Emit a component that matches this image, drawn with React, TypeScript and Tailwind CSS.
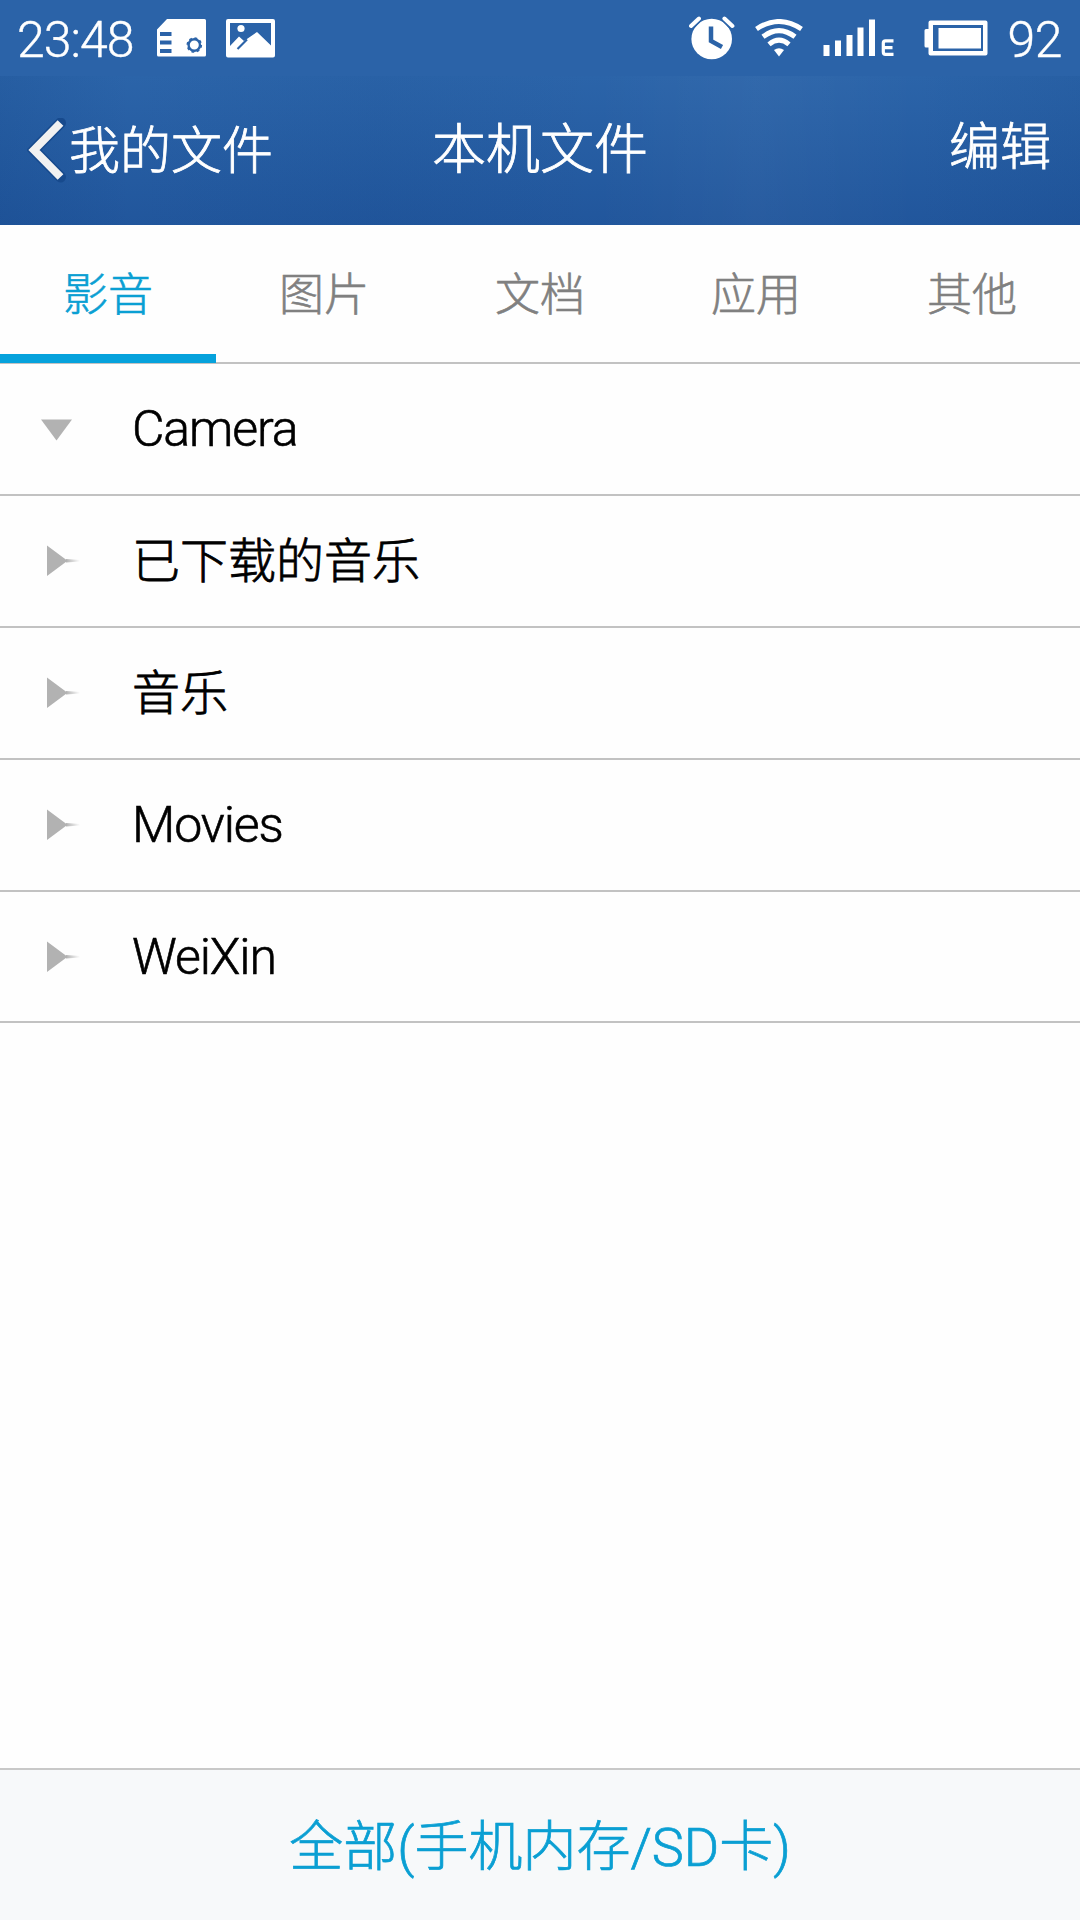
import type { ReactNode } from "react";

const tabs = ["影音", "图片", "文档", "应用", "其他"];
const folders = [
  { name: "Camera", open: true, latin: true },
  { name: "已下载的音乐", open: false, latin: false },
  { name: "音乐", open: false, latin: false },
  { name: "Movies", open: false, latin: true },
  { name: "WeiXin", open: false, latin: true },
];

function SimIcon() {
  return (
    <svg className="ml-6 block" width="49" height="38" viewBox="0 0 49 38">
      <path
        fillRule="evenodd"
        fill="#fff"
        d="M10 0H47.500Q49 0 49 1.500V36Q49 37.500 47.500 37.500H1.500Q0 37.500 0 36V10.500ZM3 13V17H14.500V13ZM3 21.500V25.500H14.500V21.500ZM3 30V34H14.500V30Z"
      />
      <circle cx="37.300" cy="26" r="5.700" fill="none" stroke="#2b63a8" strokeWidth="2.400" />
      <circle cx="37.300" cy="26" r="7" fill="none" stroke="#2b63a8" strokeWidth="1.600" strokeDasharray="2.800 2.700" />
    </svg>
  );
}

function PictureIcon() {
  return (
    <svg className="ml-5 block" width="49" height="39" viewBox="0 0 49 39">
      <path
        fillRule="evenodd"
        fill="#fff"
        d="M2 0H47Q49 0 49 2V36.500Q49 38.500 47 38.500H2Q0 38.500 0 36.500V2Q0 0 2 0ZM4 4V27L13 17.500L18 22L31 13L45 26.500V4Z"
      />
      <circle cx="15" cy="9.500" r="3.600" fill="#fff" />
      <path d="M11.500 30L21 20.500" stroke="#2b63a8" strokeWidth="2.200" />
    </svg>
  );
}

function AlarmIcon() {
  return (
    <svg className="block" width="46" height="44" viewBox="0 0 46 44">
      <circle cx="22.700" cy="23" r="20.300" fill="#fff" />
      <path d="M2 10.500L10 2.500M43.400 10.500L35.400 2.500" stroke="#2b63a8" strokeWidth="7" />
      <path d="M2 10L10 2.500M43.400 10L35.400 2.500" stroke="#fff" strokeWidth="4" strokeLinecap="round" />
      <path d="M22 10.500V25L33 31" fill="none" stroke="#2b63a8" strokeWidth="4.500" />
    </svg>
  );
}

function WifiIcon() {
  return (
    <svg className="ml-5 block" width="48" height="38" viewBox="0 0 48 38">
      <g fill="none" stroke="#fff" strokeWidth="5">
        <path d="M1.500 10Q24 -5 46.500 10" />
        <path d="M8 17.800Q24 5.500 40 17.800" />
        <path d="M14 25.300Q24 17 34 25.300" />
      </g>
      <path d="M19 31Q24 27.500 29 31L24 37.500Z" fill="#fff" />
    </svg>
  );
}

function SignalIcon() {
  return (
    <svg className="ml-5 block" width="72" height="38" viewBox="0 0 72 38">
      <path
        fill="#fff"
        d="M0.500 26H6.500V37H0.500ZM12 21.500H18V37H12ZM23.500 16H29.500V37H23.500ZM34.500 8.500H40.500V37H34.500ZM46 0.500H52V37H46Z"
      />
      <path d="M70.500 21.800H62.500Q60.300 21.800 60.300 24V33Q60.300 35.400 62.500 35.400H70.500M60.300 28.600H69.500" fill="none" stroke="#fff" strokeWidth="3.200" />
    </svg>
  );
}

function BatteryIcon() {
  return (
    <svg className="ml-[29px] block" width="64" height="36" viewBox="0 0 64 36">
      <path
        fillRule="evenodd"
        fill="#fff"
        d="M6.500 0.500H61.500Q63.500 0.500 63.500 2.500V33.500Q63.500 35.500 61.500 35.500H6.500Q4.500 35.500 4.500 33.500V27.500H2Q0.500 27.500 0.500 26V10.500Q0.500 9 2 9H4.500V2.500Q4.500 0.500 6.500 0.500ZM9 5V31H59V5Z"
      />
      <path fill="#fff" d="M14.500 8H57V28.500H14.500Z" />
    </svg>
  );
}

function Marker({ open }: { open: boolean }) {
  return open ? (
    <svg className="block" width="45" height="32" viewBox="0 0 45 32">
      <path d="M0 6.500H31L15.500 27.500Z" fill="#b2b2b2" />
    </svg>
  ) : (
    <svg className="block" width="45" height="32" viewBox="0 0 45 32">
      <defs>
        <linearGradient id="tail">
          <stop offset="0" stopColor="#b2b2b2" />
          <stop offset="1" stopColor="#b2b2b2" stopOpacity="0" />
        </linearGradient>
      </defs>
      <path d="M6 0.500V31L26.500 15.700Z" fill="#b2b2b2" />
      <path d="M25 14L39 15V16.500L25 17.500Z" fill="url(#tail)" />
    </svg>
  );
}

function Row({ open, latin, children }: { open: boolean; latin: boolean; children: ReactNode }) {
  return (
    <li className="flex h-[132px] items-center border-b-2 border-[#c2c2c2] pl-[41px] last:h-[131px]">
      <Marker open={open} />
      <span
        className={
          latin
            ? "ml-[46px] text-[50px] leading-none tracking-[-1.1px] text-black [-webkit-text-stroke:0.6px]"
            : "ml-[46px] pt-px text-[48px] leading-none text-black [-webkit-text-stroke:0.8px]"
        }
      >
        {children}
      </span>
    </li>
  );
}

export default function App() {
  return (
    <div className="flex h-[1920px] w-[1080px] flex-col overflow-hidden bg-[#fefefe] font-['Roboto','Noto_Sans_CJK_SC',sans-serif] font-light">
      <div className="flex h-[76px] shrink-0 items-center bg-[#2b63a8] pr-[18px] pl-[17px] text-[50px] leading-none text-white">
        <span className="pt-[3px] tracking-[-1px] [-webkit-text-stroke:0.4px]">23:48</span>
        <SimIcon />
        <PictureIcon />
        <div className="ml-auto flex items-center">
          <AlarmIcon />
          <WifiIcon />
          <SignalIcon />
          <BatteryIcon />
          <span className="ml-5 pt-[3px] tracking-[-0.5px] [-webkit-text-stroke:0.4px]">92</span>
        </div>
      </div>
      <header className="grid h-[149px] shrink-0 grid-cols-3 items-center bg-[linear-gradient(90deg,#0b3a7a26,transparent_12%,#0b3a7a10_35%,transparent_55%,#ffffff08_70%,transparent_85%,#0b3a7a1c),linear-gradient(180deg,#2b64a9,#21569c)] pr-[29px] pl-[27px] text-white [-webkit-text-stroke:0.8px]">
        <div className="flex items-center">
          <svg className="block" width="42" height="66" viewBox="0 0 42 66">
            <path d="M33.500 5L7 32L33.500 59" fill="none" stroke="#174a8d" strokeWidth="11" strokeLinecap="round" />
            <path d="M33.500 5L7 32L33.500 59" fill="none" stroke="#f1f1f1" strokeWidth="8" />
          </svg>
          <span className="pt-px text-[51px] leading-none whitespace-nowrap">我的文件</span>
        </div>
        <h1 className="pt-px pl-[2px] text-center text-[54px] leading-none">本机文件</h1>
        <span className="pb-[6px] text-right text-[51px] leading-none">编辑</span>
      </header>
      <nav className="grid h-[139px] shrink-0 grid-cols-5 border-b-2 border-[#c2c2c2]">
        {tabs.map((tab, i) => (
          <div
            key={tab}
            className={
              i === 0
                ? "relative flex items-center justify-center pt-[4px] text-[45px] leading-none text-[#0a9fd3] [-webkit-text-stroke:0.6px] after:absolute after:-bottom-[1px] after:left-0 after:h-[9px] after:w-full after:bg-[#06a2dc]"
                : "flex items-center justify-center pt-[4px] text-[45px] leading-none text-[#808080] [-webkit-text-stroke:0.6px]"
            }
          >
            {tab}
          </div>
        ))}
      </nav>
      <ul className="grow">
        {folders.map((folder) => (
          <Row key={folder.name} open={folder.open} latin={folder.latin}>
            {folder.name}
          </Row>
        ))}
      </ul>
      <footer className="flex h-[152px] shrink-0 items-center justify-center border-t-2 border-[#c8c8c8] bg-[#f7f9fa] pt-[6px] text-[54px] leading-none text-[#0a9fd3] [-webkit-text-stroke:0.7px]">
        全部(手机内存/SD卡)
      </footer>
    </div>
  );
}
